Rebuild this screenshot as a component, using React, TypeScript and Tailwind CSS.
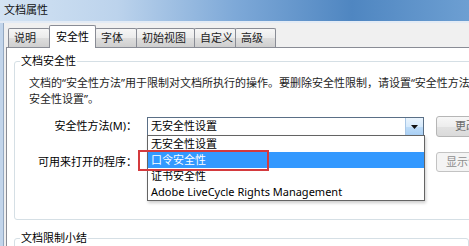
const tabs = [
  { label: '说明', w: 'w-[42px]' },
  { label: '安全性', w: 'w-[47px]', active: true },
  { label: '字体', w: 'w-[42px]' },
  { label: '初始视图', w: 'w-[59px]' },
  { label: '自定义', w: 'w-[42px]' },
  { label: '高级', w: 'w-[41px]' },
];

const options = ['无安全性设置', '口令安全性', '证书安全性', 'Adobe LiveCycle Rights Management'];

export default function App() {
  return (
    <div className="w-[469px] h-[246px] overflow-hidden flex flex-col bg-[#f0f0f0] text-[11px] text-black font-['Noto_Sans','Noto_Sans_CJK_SC',sans-serif]">
      <div className="h-[21px] shrink-0 flex items-center pl-[4px] text-[11px] text-[#111] bg-[linear-gradient(90deg,#d3e3f3_0%,#bcd3ec_25%,#7ea9d8_50%,#4f86c1_75%,#6d9fd2_100%)]">
        文档属性
      </div>
      <div className="h-[2px] shrink-0 bg-[#e3ebf5]" />
      <div className="flex flex-1 min-h-0">
        <div className="w-[3px] bg-[#c2d5eb]" />
        <div className="w-px bg-[#94a9c2]" />
        <div className="flex-1 flex flex-col pl-[2px] pt-[2px] min-w-0">
          <div className="h-[22px] flex items-end pl-[2px] relative z-10">
            {tabs.map((t, i) =>
              t.active ? (
                <div
                  key={t.label}
                  className={`${t.w} h-[23px] -mb-px ${i > 0 ? '-ml-px' : ''} border border-b-0 border-[#898c95] rounded-t-[2px] bg-white flex items-center pl-[6px] whitespace-nowrap`}
                >
                  {t.label}
                </div>
              ) : (
                <div
                  key={t.label}
                  className={`${t.w} h-[19px] ${i > 0 ? '-ml-px' : ''} border border-b-0 border-[#898c95] rounded-t-[2px] bg-[linear-gradient(180deg,#f6f6f6_0%,#ebebeb_50%,#dddddd_51%,#cfcfcf_100%)] flex items-center pl-[5px] text-[#222] whitespace-nowrap`}
                >
                  {t.label}
                </div>
              ),
            )}
          </div>
          <div className="flex-1 border-l border-t border-[#898c95] bg-white pl-[7px] pt-[6px]">
            <fieldset className="border border-[#d5dfe5] rounded-[3px] pb-[47px]">
              <legend className="ml-[5px] px-[1px] leading-[14px]">文档安全性</legend>
              <div className="pl-[14px] mt-[7px] leading-[16px] whitespace-nowrap text-[#1e1e1e]">
                文档的“安全性方法”用于限制对文档所执行的操作。要删除安全性限制，请设置“安全性方法”为“无
                <br />
                安全性设置”。
              </div>
              <div className="mt-[10px] flex items-center h-[19px]">
                <div className="w-[122px] text-right whitespace-nowrap">安全性方法(M)：</div>
                <div className="ml-[10px] w-[277px] h-[19px] relative">
                  <div className="h-full border border-[#5a6f86] bg-white flex items-center">
                    <span className="pl-[3px] flex-1">无安全性设置</span>
                    <div className="w-[18px] h-full border-l border-[#a9c7e6] bg-[linear-gradient(180deg,#eaf4fd_0%,#d6eafc_50%,#bedcf8_51%,#a9d0f5_100%)] flex items-center justify-center">
                      <svg width="7" height="4" viewBox="0 0 7 4">
                        <path d="M0 0h7L3.5 4z" fill="#111" />
                      </svg>
                    </div>
                  </div>
                  <div className="absolute left-0 top-[18px] w-[278px] border border-[#646464] bg-white shadow-[1px_2px_3px_rgba(0,0,0,0.2)] z-20">
                    {options.map((o, i) => (
                      <div
                        key={o}
                        className={`h-[16px] leading-[16px] pl-[3px] whitespace-nowrap ${i === 1 ? 'bg-[#3399ff] text-white' : ''}`}
                      >
                        {o}
                      </div>
                    ))}
                    <div className="absolute left-[-10px] top-[14px] w-[131px] h-[21px] border-2 border-[#d43a3e]" />
                  </div>
                </div>
                <button className="ml-[12px] w-[80px] h-[21px] shrink-0 border border-[#b6b6b6] rounded-[3px] bg-[linear-gradient(180deg,#f7f7f7_0%,#ededed_50%,#e2e2e2_51%,#dadada_100%)] pl-[18px] text-left text-[#6a6a6a] whitespace-nowrap">
                  更改设置...
                </button>
              </div>
              <div className="mt-[16px] flex items-center h-[20px]">
                <div className="w-[122px] text-right whitespace-nowrap">可用来打开的程序：</div>
                <div className="ml-[10px] w-[277px]" />
                <button className="ml-[12px] w-[80px] h-[20px] shrink-0 border border-[#c3c3c3] rounded-[3px] bg-[#f4f4f4] pl-[9px] text-left text-[#8d8d8d] whitespace-nowrap">
                  显示详细信息...
                </button>
              </div>
            </fieldset>
            <fieldset className="mt-[11px] border border-[#d5dfe5] rounded-[3px] h-[40px]">
              <legend className="ml-[5px] px-[1px] leading-[14px]">文档限制小结</legend>
            </fieldset>
          </div>
        </div>
      </div>
    </div>
  );
}
